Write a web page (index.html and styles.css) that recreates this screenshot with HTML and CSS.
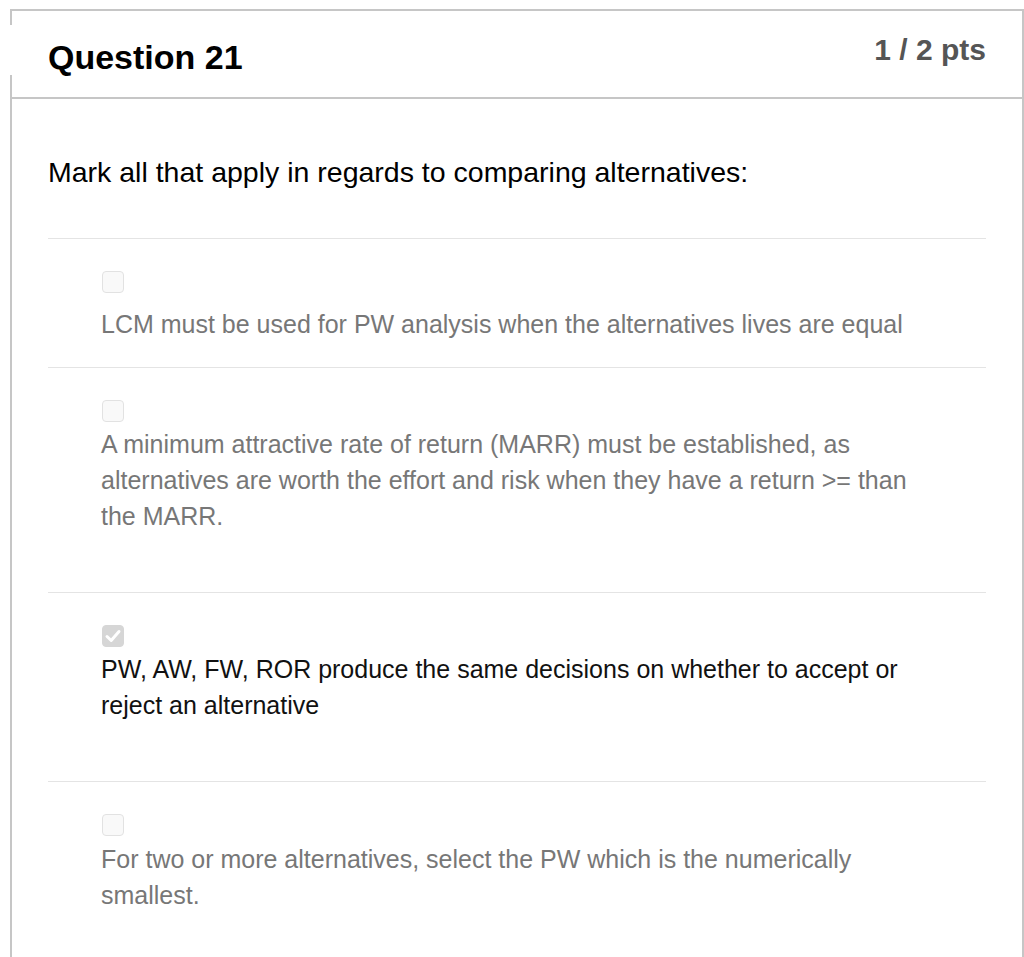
FILE: index.html
```html
<!DOCTYPE html>
<html lang="en">
<head>
<meta charset="utf-8">
<title>Question 21</title>
<link rel="stylesheet" href="styles.css">
</head>
<body>
<div class="quiz">
  <div class="quiz-header">
    <h2 class="quiz-title">Question 21</h2>
    <div class="quiz-points">1 / 2 pts</div>
  </div>
  <div class="quiz-body">
    <p class="quiz-text">Mark all that apply in regards to comparing alternatives:</p>
    <div class="answers">
      <div class="answer answer-first">
        <span class="check"></span>
        <div class="answer-text">LCM must be used for PW analysis when the alternatives lives are equal</div>
      </div>
      <div class="answer">
        <span class="check"></span>
        <div class="answer-text">A minimum attractive rate of return (MARR) must be established, as<br>alternatives are worth the effort and risk when they have a return &gt;= than<br>the MARR.</div>
      </div>
      <div class="answer answer-selected">
        <span class="check check-on"><svg width="22" height="22" viewBox="0 0 22 22"><path d="M5 11.5 L9.2 15.5 L17 6.5" fill="none" stroke="#ffffff" stroke-width="3" stroke-linecap="round" stroke-linejoin="round"/></svg></span>
        <div class="answer-text">PW, AW, FW, ROR produce the same decisions on whether to accept or<br>reject an alternative</div>
      </div>
      <div class="answer answer-last">
        <span class="check"></span>
        <div class="answer-text">For two or more alternatives, select the PW which is the numerically<br>smallest.</div>
      </div>
    </div>
  </div>
</div>
</body>
</html>
```
FILE: styles.css
```css
html, body {
  margin: 0;
  padding: 0;
  background: #ffffff;
  overflow: hidden;
}
body {
  font-family: "Liberation Sans", Arial, sans-serif;
  color: #111111;
}
.quiz {
  box-sizing: border-box;
  width: 1014px;
  margin: 9px 0 0 10px;
  border: 2px solid #c6c6c6;
  border-bottom: none;
  min-height: 960px;
}
.quiz-header {
  position: relative;
  height: 86px;
  border-bottom: 2px solid #c6c6c6;
  display: flex;
  justify-content: space-between;
  align-items: flex-start;
  padding: 0 36px;
}
.quiz-header::before {
  content: "";
  position: absolute;
  left: -2px;
  top: 14px;
  width: 2px;
  height: 50px;
  background: #ffffff;
}
.quiz-title {
  margin: 26px 0 0 0;
  font-size: 34px;
  line-height: 40px;
  font-weight: bold;
  color: #000000;
}
.quiz-points {
  margin-top: 19px;
  font-size: 30px;
  line-height: 40px;
  font-weight: bold;
  color: #555555;
}
.quiz-body {
  padding: 0 36px;
}
.quiz-text {
  margin: 52px 0 0 0;
  font-size: 28.5px;
  line-height: 42px;
  color: #000000;
}
.answers {
  margin-top: 45px;
}
.answer {
  border-top: 1px solid #e4e4e4;
  padding: 32px 0 58px 53px;
}
.answer-first {
  padding-bottom: 25px;
}
.answer-last {
  padding-bottom: 40px;
}
.check {
  display: block;
  box-sizing: border-box;
  width: 22px;
  height: 22px;
  margin-left: 1px;
  border: 1px solid #e2e2e2;
  border-radius: 4px;
  background: #f9f9f9;
}
.check svg {
  display: block;
  margin: -1px;
}
.check-on {
  background: #d6d6d6;
  border-color: #d6d6d6;
}
.answer-text {
  margin-top: 4px;
  font-size: 25px;
  line-height: 36px;
  color: #777777;
}
.answer-first .answer-text {
  margin-top: 13px;
}
.answer-last .answer-text {
  margin-top: 5px;
}
.answer-selected .answer-text {
  color: #111111;
}
```
